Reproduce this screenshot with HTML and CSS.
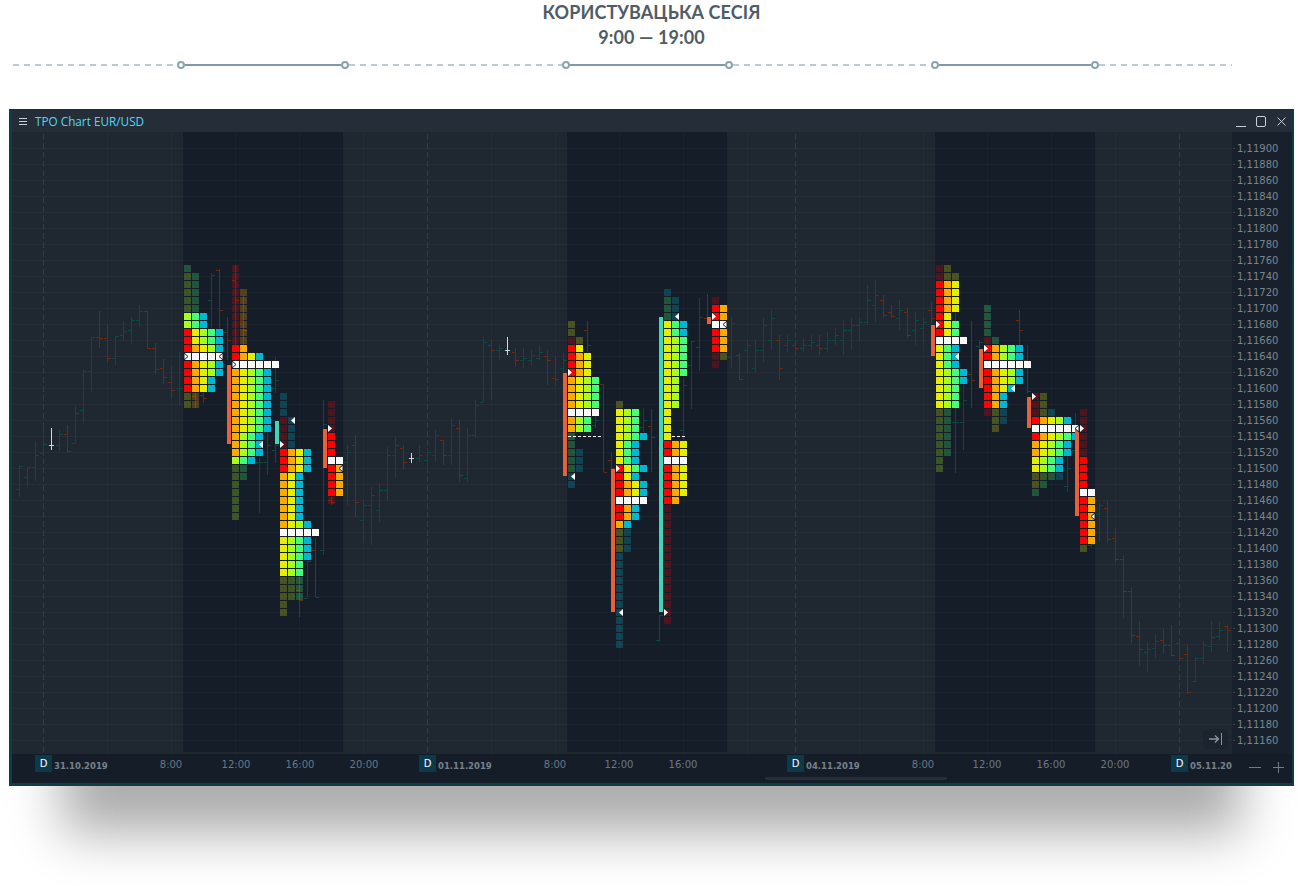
FILE: index.html
```html
<!DOCTYPE html>
<html lang="uk">
<head>
<meta charset="utf-8">
<title>TPO Chart EUR/USD</title>
<link rel="stylesheet" href="styles.css">
</head>
<body>
<header class="heading">
  <h1>КОРИСТУВАЦЬКА СЕСІЯ</h1>
  <p>9:00 — 19:00</p>
</header>
<div class="timeline">
  <i class="dash"></i><b class="node"></b><i class="solid"></i><b class="node"></b>
  <i class="dash"></i><b class="node"></b><i class="solid"></i><b class="node"></b>
  <i class="dash"></i><b class="node"></b><i class="solid"></i><b class="node"></b>
  <i class="dash"></i>
</div>
<section class="window">
  <div class="titlebar">
    <svg class="burger" width="8" height="7" viewBox="0 0 8 7"><path d="M0 .5h8M0 3.5h8M0 6.5h8" stroke="#c6d2da" fill="none"/></svg>
    <span class="title">TPO Chart EUR/USD</span>
    <div class="controls">
      <svg width="10" height="11" viewBox="0 0 10 11"><path d="M0 10.5h10" stroke="#c6d2da" fill="none"/></svg>
      <svg width="10" height="11" viewBox="0 0 10 11"><rect x=".5" y=".5" width="9" height="10" rx="1.5" stroke="#c6d2da" fill="none"/></svg>
      <svg width="9" height="9" viewBox="0 0 9 9"><path d="M.5 .5l8 8M8.5 .5l-8 8" stroke="#c6d2da" fill="none"/></svg>
    </div>
  </div>
  <div class="body">
    <div class="plot">
      <svg id="chart" class="chart" width="1220" height="622" viewBox="12 132 1220 622" shape-rendering="crispEdges"></svg>
      <button class="jump" type="button" aria-label="В кінець">
        <svg width="14" height="12" viewBox="0 0 14 12"><path d="M0 6h9M6 2.5L9.5 6 6 9.5" stroke="#8a949c" stroke-width="1.4" fill="none"/><path d="M12.5 0v12" stroke="#8a949c" fill="none"/></svg>
      </button>
    </div>
    <div class="prices">
      <span>1,11900</span><span>1,11880</span><span>1,11860</span><span>1,11840</span><span>1,11820</span><span>1,11800</span><span>1,11780</span><span>1,11760</span><span>1,11740</span><span>1,11720</span><span>1,11700</span><span>1,11680</span><span>1,11660</span><span>1,11640</span><span>1,11620</span><span>1,11600</span><span>1,11580</span><span>1,11560</span><span>1,11540</span><span>1,11520</span><span>1,11500</span><span>1,11480</span><span>1,11460</span><span>1,11440</span><span>1,11420</span><span>1,11400</span><span>1,11380</span><span>1,11360</span><span>1,11340</span><span>1,11320</span><span>1,11300</span><span>1,11280</span><span>1,11260</span><span>1,11240</span><span>1,11220</span><span>1,11200</span><span>1,11180</span><span>1,11160</span>
    </div>
    <div class="times">
      <span class="day" style="left:23px"><b class="d">D</b><span class="date">31.10.2019</span></span>
      <span class="hour" style="left:159px">8:00</span>
      <span class="hour" style="left:224px">12:00</span>
      <span class="hour" style="left:288px">16:00</span>
      <span class="hour" style="left:352px">20:00</span>
      <span class="day" style="left:407px"><b class="d">D</b><span class="date">01.11.2019</span></span>
      <span class="hour" style="left:543px">8:00</span>
      <span class="hour" style="left:607px">12:00</span>
      <span class="hour" style="left:671px">16:00</span>
      <span class="day" style="left:775px"><b class="d">D</b><span class="date">04.11.2019</span></span>
      <span class="hour" style="left:911px">8:00</span>
      <span class="hour" style="left:975px">12:00</span>
      <span class="hour" style="left:1039px">16:00</span>
      <span class="hour" style="left:1103px">20:00</span>
      <span class="day" style="left:1159px"><b class="d">D</b><span class="date">05.11.20</span></span>
      <div class="scrollbar"></div>
      <div class="zoom">
        <svg width="12" height="11" viewBox="0 0 12 11"><path d="M0 5.5h12" stroke="#6f7b85" fill="none"/></svg>
        <svg width="11" height="11" viewBox="0 0 11 11"><path d="M0 5.5h11M5.5 0v11" stroke="#6f7b85" fill="none"/></svg>
      </div>
    </div>
  </div>
</section>
<script src="chart.js"></script>
</body>
</html>
```

FILE: styles.css
```css
* { box-sizing: border-box; }
html, body { margin: 0; height: 886px; overflow: hidden; background: #fff; }
body { font-family: "Lato", "Liberation Sans", sans-serif; }

.heading { height: 50px; padding-right: 1px; text-align: center; color: #4f5c68; font-size: 18px; line-height: 25px; font-weight: 700; letter-spacing: .1px; }
.heading h1, .heading p { margin: 0; font-size: inherit; font-weight: inherit; }

.timeline {
  display: grid;
  grid-template-columns: 164px 8px 156px 8px 213px 8px 155px 8px 198px 8px 152px 8px 133px;
  align-items: center;
  width: 1219px;
  height: 8px;
  margin: 11px 0 0 13px;
}
.dash { height: 2px; background: repeating-linear-gradient(90deg, #bccad6 0 6px, transparent 6px 11px); }
.solid { height: 2px; background: #7f9aa4; }
.node { width: 8px; height: 8px; border: 2px solid #8aa4ac; border-radius: 50%; background: #fff; }

.window {
  width: 1285px;
  height: 677px;
  margin: 40px 0 0 9px;
  display: flex;
  flex-direction: column;
  border: 1px solid #0b2e3a;
  border-width: 1px 2px 3px 3px;
  border-color: #0d3442 #123a48 #123a48 #123a48;
  background: #141d28;
  box-shadow: 0 100px 50px -53px rgba(0, 0, 0, .33);
}

.titlebar { flex: none; height: 22px; display: flex; align-items: center; padding: 0 6px 0 7px; background: #252d38; }
.burger { margin-right: 8px; }
.title { font-family: "Open Sans", sans-serif; font-size: 11.75px; color: #52daf4; }
.controls { margin-left: auto; display: flex; align-items: center; gap: 10px; }
.controls svg:nth-child(2) { margin-right: 1px; }

.body { flex: 1; display: grid; grid-template-columns: 1220px 1fr; grid-template-rows: 622px 1fr; }
.plot { position: relative; background: #1f2731; }
.chart { display: block; }
.jump {
  position: absolute;
  right: 4px;
  bottom: 5px;
  width: 25px;
  height: 20px;
  padding: 0;
  border: 0;
  border-radius: 5px;
  background: #1b242e;
  display: flex;
  align-items: center;
  justify-content: center;
}

.prices {
  display: flex;
  flex-direction: column;
  padding-top: 9px;
  background: #18212b;
  font: 10px/16px "DejaVu Sans", sans-serif;
  color: #7a8690;
}
.prices span { height: 16px; padding-left: 5px; position: relative; }
.prices span::before { content: ""; position: absolute; left: 1px; top: 7px; width: 2px; height: 1px; background: #39434e; }

.times { grid-column: 1 / -1; position: relative; background: #141d28; font: 10px/16px "DejaVu Sans", sans-serif; color: #6b7884; }
.hour { position: absolute; top: 3px; transform: translateX(-50%); }
.day { position: absolute; top: 1px; display: flex; align-items: center; }
.d { width: 17px; height: 17px; background: #0e3948; color: #fff; font: 10px/17px "DejaVu Sans", sans-serif; text-align: center; }
.date { margin: 5px 0 0 2px; font: bold 8.5px/12px "DejaVu Sans", sans-serif; color: #77818b; white-space: nowrap; }
.scrollbar { position: absolute; left: 753px; top: 23px; width: 182px; height: 3px; border-radius: 2px; background: #252f3a; }
.zoom { position: absolute; right: 8px; top: 8px; display: flex; align-items: center; gap: 12px; }
```

FILE: chart.js
```js
(function () {
  var NS = 'http://www.w3.org/2000/svg';
  var svg = document.getElementById('chart');
  var COLORS = { r: '#ff0000', o: '#ffa800', y: '#e6ee00', l: '#a8ff1c', g: '#45ff78', c: '#00b8d4', w: '#ffffff' };
  var ORANGE = '#e8603a', TEAL = '#3ed8b8';

  function el(name, attrs, parent) {
    var n = document.createElementNS(NS, name);
    for (var k in attrs) n.setAttribute(k, attrs[k]);
    (parent || svg).appendChild(n);
    return n;
  }
  function rect(x, y, w, h, fill, extra) {
    var a = { x: x, y: y, width: w, height: h, fill: fill };
    if (extra) for (var k in extra) a[k] = extra[k];
    return el('rect', a);
  }

  /* day-session bands and grid */
  rect(12, 132, 1220, 620, '#1f2731');
  [183, 567, 935].forEach(function (x) { rect(x, 132, 160, 620, '#141d28'); });
  for (var gy = 148; gy < 754; gy += 16) rect(12, gy, 1220, 1, 'rgba(255,255,255,.032)');
  [107, 171, 235, 299, 363, 491, 555, 619, 683, 747, 859, 923, 987, 1051, 1115].forEach(function (x) {
    rect(x, 132, 1, 622, 'rgba(255,255,255,.028)');
  });
  [43, 427, 795, 1179].forEach(function (x) {
    for (var y = 134; y < 752; y += 9) rect(x, y, 1, 6, '#23424c');
  });
  rect(12, 754, 1220, 1, '#1b2530');

  /* price bars: x, high, low, open, close */
  var BARS = [
    [19,465,497,489,466],[27,467,487,477,467],[35,441,481,467,455],[43,427,456,453,444],
    [59,430,451,445,434],[67,425,453,434,451],[75,406,443,443,413],[83,369,423,410,371],
    [91,337,392,371,337],[99,311,348,337,338],[107,325,362,338,358],[115,336,365,358,336],
    [123,321,341,335,331],[131,317,344,330,320],[139,305,327,320,311],[147,311,349,311,348],
    [155,343,374,348,369],[163,359,384,368,377],[171,367,399,382,390],[179,352,406,388,388],
    [195,393,408,396,400],[203,393,403,395,398],[211,273,328,300,275],[219,269,328,270,310],
    [227,317,360,332,340],[235,265,345,280,300],[243,295,350,320,330],[259,458,513,462,462],
    [267,433,475,462,445],[275,357,393,388,380],[275,443,463,450,445],[299,577,617,590,600],
    [307,561,598,598,561],[315,538,597,550,597],[323,400,555,550,424],[331,497,505,500,502],
    [347,445,505,462,452],[355,435,517,445,502],[363,500,543,520,505],[371,487,545,505,495],
    [379,483,522,510,490],[387,447,500,490,455],[395,437,478,455,445],[403,445,470,448,462],
    [419,445,462,458,455],[427,448,470,460,452],[435,430,462,455,435],[443,440,465,440,455],
    [451,418,465,455,425],[459,420,482,428,475],[467,428,482,478,435],[475,400,438,435,405],
    [483,337,402,402,342],[491,340,400,345,350],[499,345,360,350,348],[515,348,366,352,360],
    [523,348,368,360,358],[531,350,366,360,355],[539,345,360,358,352],[547,350,385,356,360],
    [555,357,385,378,379],[563,353,372,368,360],[587,321,352,330,345],[595,417,428,425,420],
    [603,384,472,384,472],[611,453,472,460,468],[643,408,432,427,420],[651,409,472,426,437],
    [659,615,642,640,615],[683,378,440,430,385],[691,341,409,365,341],[699,298,371,347,317],
    [707,294,325,318,322],[731,317,368,357,323],[739,353,380,355,379],[747,340,372,350,345],
    [755,340,372,368,350],[763,318,362,350,325],[771,310,350,340,318],[779,335,380,340,368],
    [787,335,352,345,340],[795,340,352,345,348],[803,338,352,348,345],[811,335,350,345,342],
    [819,335,355,345,348],[827,332,352,348,340],[835,328,345,340,335],[843,320,355,340,330],
    [851,318,350,330,325],[859,318,340,325,322],[867,285,325,322,300],[875,280,322,305,295],
    [883,295,318,300,315],[891,305,318,312,316],[899,300,330,318,310],[907,308,338,312,335],
    [915,312,345,330,320],[923,318,345,328,322],[931,302,323,310,318],[955,313,473,422,422],
    [963,385,450,422,400],[971,321,408,374,380],[979,340,348,346,342],[1019,310,345,320,330],
    [1027,345,393,360,391],[1067,457,492,486,468],[1075,413,470,450,430],[1091,540,548,545,544],
    [1099,502,542,514,505],[1107,501,543,508,539],[1115,528,562,538,559],[1123,555,618,559,591],
    [1131,587,643,591,635],[1139,621,666,636,649],[1147,642,672,652,649],[1155,634,658,648,641],
    [1163,629,654,640,645],[1171,625,656,645,655],[1179,641,660,643,658],[1187,645,694,654,692],
    [1195,657,682,681,658],[1203,641,664,658,645],[1211,621,652,646,637],[1219,622,640,636,630],
    [1227,625,652,626,630]
  ];
  BARS.forEach(function (b) {
    var col = b[4] <= b[3] ? '#0b4a3e' : '#6a2a0f';
    rect(b[0], b[1], 1, b[2] - b[1], col);
    rect(b[0] - 3, b[3], 3, 1, col);
    rect(b[0] + 1, b[4], 3, 1, col);
  });
  [[51, 428, 450, 445], [411, 453, 463, 458], [507, 337, 355, 350]].forEach(function (w) {
    rect(w[0], w[1], 1, w[2] - w[1], '#cfd8e0');
    rect(w[0] - 2, w[3], 5, 1, '#cfd8e0');
  });

  /* TPO profiles: left x, first row, then one string per row (upper case = dimmed, space = empty) */
  var PROFILES = [
    [184, 0, ['G','LG','LG','LG','LG','LG','lgc','lgc','rylgc','rylgc','roylc','wwwww','roylc','roylc','royc','royc','YO','YO']],
    [232, 0, ['R','R','R','RO','RO','RO','RO','RO','RO','RO','ro','royc','wwwwww','oylgc','oylgc','oylgc','oylgc','oylgc','oylgc','oylgc','oylgc','olgc','olgc','olgc','lgc','LG','LG','L','L','L','L','L']],
    [280, 16, ['C','C','C','RC','RC','RC','RC','royc','royc','royc','oyc','oyc','oyc','oyc','oyc','oyc','oylc','wwwww','ylgc','ylgc','ylgc','ylg','ylg','YLG','YLG','YLG','Y','Y']],
    [328, 17, ['R','R','R','R','r','r','r','ww','ro','ro','ro','ro','R']],
    [568, 7, ['Y','Y','RY','ry','roy','roy','roy','oylg','oylg','oylg','oylg','wwww','olg','olg','G','G','GC','GC','GC','C','C']],
    [616, 17, ['Y','ylg','ylg','ylg','ylgc','ygc','ygc','ygc','rygc','ryc','royc','royc','wwww','roc','roc','oc','YC','YC','YC','C','C','C','C','C','C','C','C','C','C','C','C']],
    [664, 3, ['C','GC','GC','GC','ygc','ygc','ylg','ylg','ylg','ylg','ylg','yl','yl','yl','yl','y','y','y','y','roy','roy','www','roy','roy','roy','roy','ro','R','R','R','R','R','R','R','R','R','R','R','R','R','R','R']],
    [712, 4, ['R','ro','ro','ww','ro','ro','ro','RY','R']],
    [936, 0, ['RY','RYY','roy','roy','roy','roy','ry','ryg','ryg','wwww','ygc','ygc','ygc','ylgc','ylgc','ylg','ylg','ylg','YG','LG','LG','LG','LG','LG','L','L']],
    [984, 5, ['G','G','G','G','RG','rolgc','rolgc','wwwwww','roylc','roylc','royc','roc','roc','RYC',' YC',' Y']],
    [1032, 16, ['RY','RY','RYC','roylc','wwwwww','roylgc','oylgc','oylgc','ylgc','ylgc','YLGC','YG','G']],
    [1080, 18, ['R','R','R','R','R','R','r','r','r','r','ww','ro','ro','ro','ro','ro','ro','Y']]
  ];
  PROFILES.forEach(function (p) {
    p[2].forEach(function (row, i) {
      var y = 265 + 8 * (p[1] + i);
      row.split('').forEach(function (ch, j) {
        if (ch === ' ') return;
        var key = ch.toLowerCase();
        rect(p[0] + 8 * j, y, 7, 7, COLORS[key], ch === key ? null : { 'fill-opacity': '.25' });
      });
    });
  });

  /* value-area range bars */
  [
    [227,365,444,0],[275,421,444,1],[323,429,468,0],
    [563,373,476,0],[611,469,612,0],[659,317,612,1],[707,317,324,0],
    [931,325,356,0],[979,349,388,0],[1027,397,428,0],[1075,429,516,0]
  ].forEach(function (b) { rect(b[0], b[1], 4, b[2] - b[1], b[3] ? TEAL : ORANGE); });

  /* dashed POC lines */
  [[568, 600, 436], [672, 687, 436]].forEach(function (d) {
    for (var x = d[0]; x < d[1]; x += 5) rect(x, d[2], 3, 1, '#ffffff');
  });

  /* session markers: x of cell, row, direction, outlined */
  var MARKS = [
    [184,11,1,1],[216,11,-1,1],[232,12,1,1],[256,22,-1,0],[288,19,-1,0],[280,22,1,0],[328,20,1,0],[336,25,-1,1],
    [568,13,1,0],[568,26,-1,0],[616,25,1,0],[616,43,-1,0],[672,6,-1,0],[664,43,1,0],[712,6,1,0],[720,7,-1,1],
    [936,7,1,0],[952,11,-1,0],[984,10,1,0],[1008,15,-1,0],[1032,16,1,0],[1072,20,-1,1],[1080,20,1,0],[1088,31,-1,1]
  ];
  MARKS.forEach(function (m) {
    var y = 265 + 8 * m[1], x = m[0];
    var pts = m[2] > 0
      ? [x, y, x + 4, y + 3.5, x, y + 7]
      : [x + 7, y, x + 3, y + 3.5, x + 7, y + 7];
    var a = { points: pts.join(' '), fill: '#ffffff', 'shape-rendering': 'auto' };
    if (m[3]) { a.stroke = '#141d28'; a['stroke-width'] = 1; }
    el('polygon', a);
  });
})();
```
